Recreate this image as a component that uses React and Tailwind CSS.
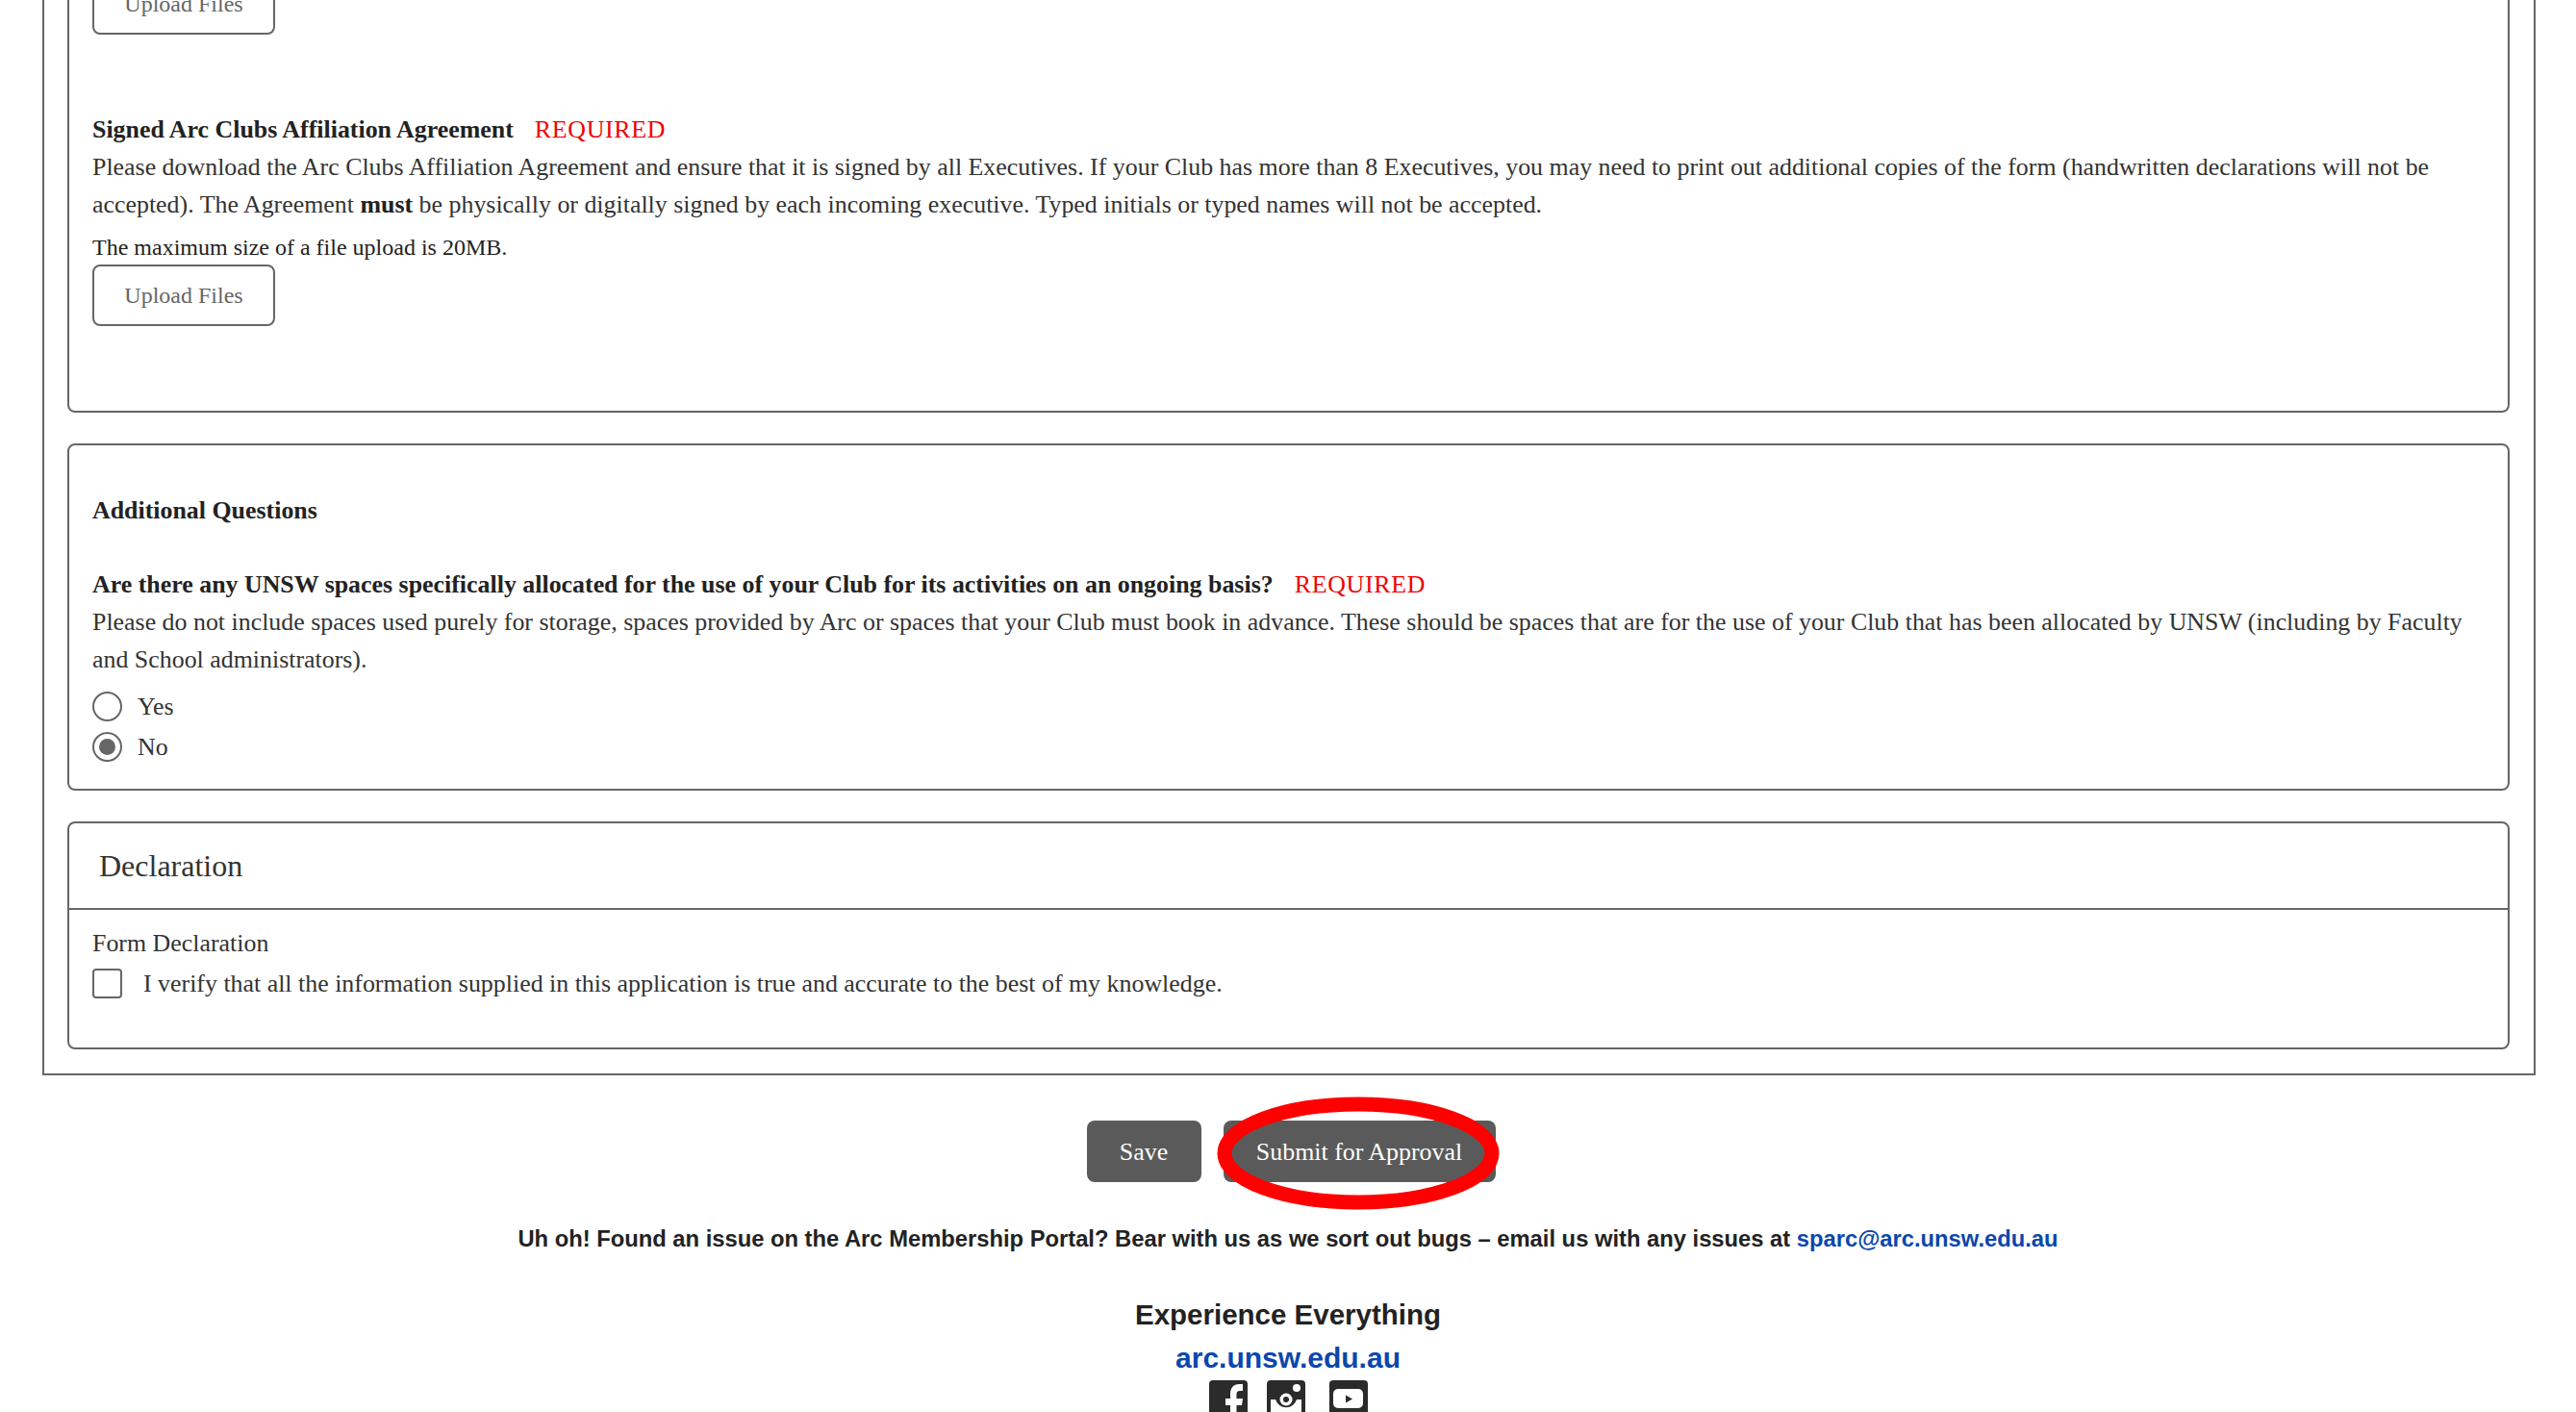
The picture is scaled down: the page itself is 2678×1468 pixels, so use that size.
const serif = "font-['Liberation_Serif',serif]";

function Required() {
  return <span className="ml-[22px] font-normal tracking-[0.7px] text-[#f00000]">REQUIRED</span>;
}

function UploadButton() {
  return (
    <button className="block h-[64px] w-[190px] rounded-[8px] border-2 border-[#666] bg-white text-center text-[24px] text-[#666]">
      Upload Files
    </button>
  );
}

function Radio({ checked, label }) {
  return (
    <div className="flex h-[42px] items-center">
      <span className="flex h-[31px] w-[31px] items-center justify-center rounded-full border-2 border-[#666] bg-white">
        {checked && <span className="h-[17px] w-[17px] rounded-full bg-[#666]" />}
      </span>
      <span className="ml-[16px] text-[25.9px] text-[#333]">{label}</span>
    </div>
  );
}

function Facebook() {
  return (
    <svg width="40" height="40" viewBox="0 0 40 40" className="block">
      <rect width="40" height="40" rx="4" fill="#2b2b2b" />
      <path d="M22 40V26h-5v-7h5v-5C22 8 25.500 4 31 4h4v7h-3c-2 0-3.500 1-3.500 3.200V19H35l-1 7h-5.500v14z" fill="#fff" />
    </svg>
  );
}

function Instagram() {
  return (
    <svg width="40" height="40" viewBox="0 0 40 40" className="block">
      <rect width="40" height="40" rx="4" fill="#2b2b2b" />
      <path d="M4 20h5a11.500 11.500 0 0 0 22 0h5v17H4z" fill="#fff" />
      <circle cx="20" cy="20" r="6.500" fill="#fff" />
      <circle cx="20" cy="20" r="3" fill="#2b2b2b" />
      <circle cx="31" cy="8" r="4" fill="#fff" />
    </svg>
  );
}

function Youtube() {
  return (
    <svg width="40" height="40" viewBox="0 0 40 40" className="block">
      <rect width="40" height="40" rx="4" fill="#2b2b2b" />
      <rect x="4" y="9" width="31" height="20" rx="5" fill="#fff" />
      <path d="M17 15.500l7 4-7 4z" fill="#2b2b2b" />
    </svg>
  );
}

export default function App() {
  return (
    <div className={`h-[1468px] w-[2678px] overflow-hidden bg-white ${serif} text-[25.9px] leading-[39px] text-[#333]`}>
      <div className="-mt-[28px]">
        <div className="ml-[44px] w-[2592px] border-x-2 border-b-2 border-[#666] pb-[25px] pl-[24px] pr-[25px]">
          <section className="rounded-b-[8px] border-x-2 border-b-2 border-[#666] px-[24px] pb-[88px]">
            <UploadButton />
            <div className="mt-[79px] font-bold text-[#222]">
              Signed Arc Clubs Affiliation Agreement<Required />
            </div>
            <p>
              Please download the Arc Clubs Affiliation Agreement and ensure that it is signed by all Executives. If your Club has more than 8 Executives, you may need to print out additional copies of the form (handwritten declarations will not be accepted). The Agreement <b className="text-[#222]">must</b> be physically or digitally signed by each incoming executive. Typed initials or typed names will not be accepted.
            </p>
            <div className="mt-[6px] h-[37px] text-[24px] text-[#222]">The maximum size of a file upload is 20MB.</div>
            <UploadButton />
          </section>

          <section className="mt-[32px] rounded-[8px] border-2 border-[#666] px-[24px] pb-[23px] pt-[48px]">
            <div className="font-bold text-[#222]">Additional Questions</div>
            <div className="mt-[38px] font-bold text-[#222]">
              Are there any UNSW spaces specifically allocated for the use of your Club for its activities on an ongoing basis?<Required />
            </div>
            <p>
              Please do not include spaces used purely for storage, spaces provided by Arc or spaces that your Club must book in advance. These should be spaces that are for the use of your Club that has been allocated by UNSW (including by Faculty and School administrators).
            </p>
            <div className="mt-[8px]">
              <Radio label="Yes" />
              <Radio checked label="No" />
            </div>
          </section>

          <section className="mt-[32px] rounded-[8px] border-2 border-[#666]">
            <div className="flex h-[90px] items-center border-b-2 border-[#666] pl-[31px] text-[32px] text-[#333]">Declaration</div>
            <div className="px-[24px] pb-[47px] pt-[15px]">
              <div className="h-[42px]">Form Declaration</div>
              <div className="flex items-center">
                <span className="h-[31px] w-[31px] rounded-[4px] border-2 border-[#666] bg-white" />
                <span className="ml-[22px]">I verify that all the information supplied in this application is true and accurate to the best of my knowledge.</span>
              </div>
            </div>
          </section>
        </div>

        <div className="ml-[6px] mt-[47px] flex justify-center gap-[23px]">
          <button className="h-[64px] w-[119px] rounded-[8px] bg-[#5a5a5a] text-center text-[25.9px] text-white">Save</button>
          <div className="relative">
            <button className="h-[64px] w-[283px] rounded-[8px] bg-[#5a5a5a] text-center text-[25.9px] text-white">Submit for Approval</button>
            <svg width="296" height="118" viewBox="0 0 296 118" className="absolute -left-[7px] -top-[25px]">
              <ellipse cx="147" cy="59" rx="139" ry="51" fill="none" stroke="#ff0000" strokeWidth="15" />
            </svg>
          </div>
        </div>

        <div className="mt-[44px] text-center font-['Liberation_Sans',sans-serif] text-[#222]">
          <div className="text-[23.75px] font-bold leading-[30px]">
            Uh oh! Found an issue on the Arc Membership Portal? Bear with us as we sort out bugs – email us with any issues at <span className="text-[#0b47ad]">sparc@arc.unsw.edu.au</span>
          </div>
          <div className="mt-[47px] text-[29.5px] font-bold leading-[34px]">Experience Everything</div>
          <div className="mt-[11px] text-[30px] font-bold leading-[34px] text-[#0b47ad]">arc.unsw.edu.au</div>
          <div className="mt-[6px] flex justify-center">
            <Facebook />
            <span className="w-[20px]" />
            <Instagram />
            <span className="w-[25px]" />
            <Youtube />
          </div>
        </div>
      </div>
    </div>
  );
}
